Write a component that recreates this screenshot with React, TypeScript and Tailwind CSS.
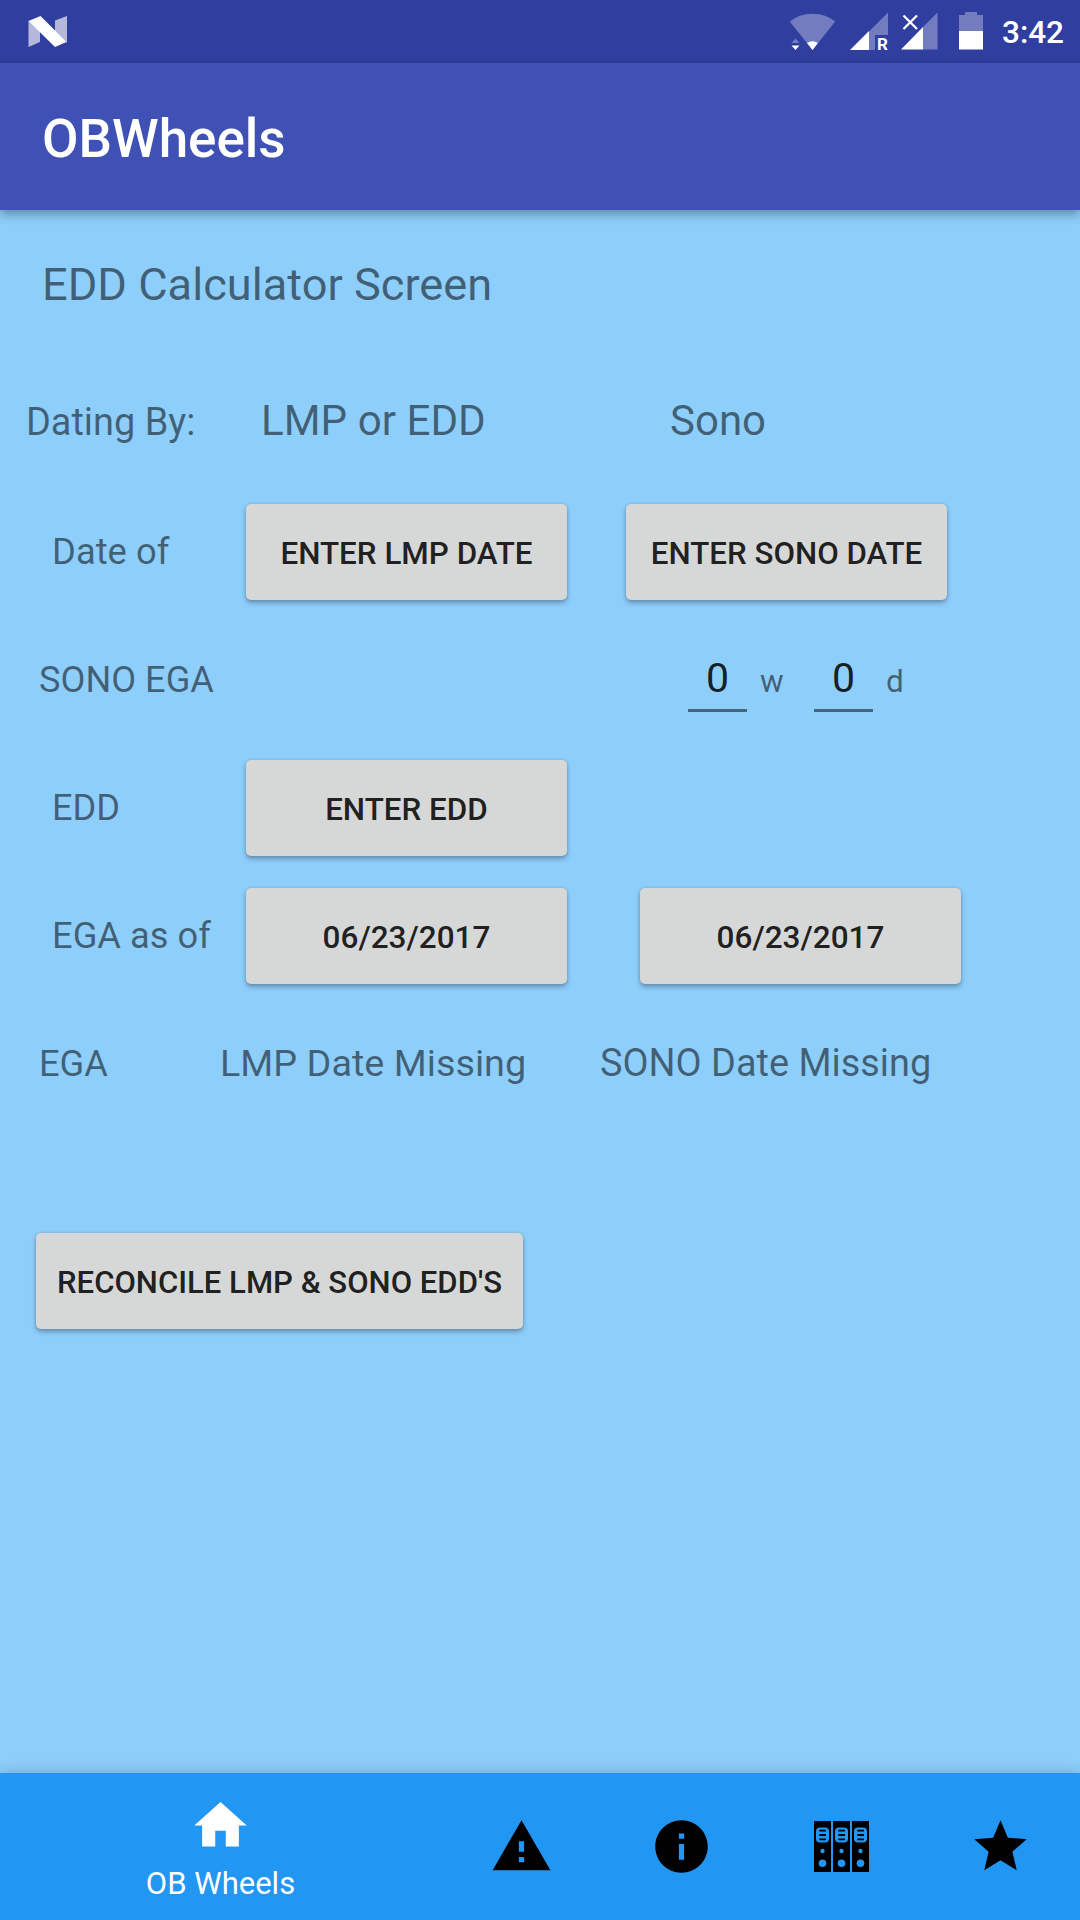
import React from 'react';

const labelClass = 'whitespace-nowrap text-black/54 leading-none';

const RaisedButton: React.FC<{ children: React.ReactNode; className?: string }> = ({ children, className = '' }) => (
  <button
    className={`h-24 shrink-0 rounded-[5px] bg-[#d6d7d7] pt-[3px] leading-none font-medium whitespace-nowrap text-black/87 shadow-[0_3px_5px_rgba(0,0,0,0.28),0_0_3px_rgba(0,0,0,0.14)] ${className}`}
  >
    {children}
  </button>
);

const NumberField: React.FC<{ value: string }> = ({ value }) => (
  <div className="flex h-[63px] w-[59px] items-center justify-center border-b-3 border-[#45667c] text-[41px] leading-none text-black/87">
    {value}
  </div>
);

const StatusBar: React.FC = () => (
  <div className="flex h-[63px] items-center justify-between bg-[#303f9f]">
    <svg width="96" height="63" viewBox="0 0 96 63" fill="#fff">
      <path opacity=".64" d="M28.5 20.5L40 31v11l-11.500 5z" />
      <path opacity=".64" d="M55 20.500L67 16v27L55 31z" />
      <path d="M28.500 21L40.500 16L66.500 42L55 47z" />
    </svg>
    <div className="flex items-center">
      <svg width="220" height="63" viewBox="780 0 220 63" fill="#fff">
        {/* wifi */}
        <path opacity=".32" d="M812.500 50L789.800 21.500Q799 13.700 812.500 13.700T835.200 21.500z" />
        <path d="M812.500 50L807 43Q812.500 39.500 818 43z" />
        <path opacity=".32" d="M795.500 38.500l4 4.500h-8z" />
        <path d="M791.500 45.500h8l-4 4.500z" />
        {/* roaming sim */}
        <path opacity=".32" d="M869 31.500L888 12.500V35H875v15h-6z" />
        <path d="M850 50l19-19v19z" />
        <text x="877" y="50" fontSize="17" fontWeight="700" fontFamily="Roboto, sans-serif">R</text>
        {/* second sim, no service */}
        <path opacity=".32" d="M923 27l14.500-14.500V49.500H923z" />
        <path d="M901 49.500L923 27v22.500z" />
        <path d="M903.500 15.500l13.500 13.500m0-13.500l-13.500 13.500" stroke="#fff" strokeWidth="2.200" />
        {/* battery */}
        <path opacity=".32" d="M959 15h6v-3h12v3h6v16h-24z" />
        <path d="M959 31h24v18.500h-24z" />
      </svg>
      <span className="w-20 pt-[3px] pl-[2px] text-[31.5px] leading-none font-medium text-white">3:42</span>
    </div>
  </div>
);

const RackIcon: React.FC = () => (
  <svg width="55" height="51" viewBox="0 0 55 51">
    {[0, 19, 38].map((x) => (
      <g key={x} transform={`translate(${x} 0)`}>
        <rect width="17" height="51" />
        <rect x="2" y="6.500" width="13" height="15" rx="4" fill="#2196f3" />
        <path d="M5.300 9.700h6.700M5.300 14h6.700M5.300 18.300h6.700" stroke="#000" strokeWidth="1.800" />
        <circle cx="8.500" cy="30" r="2.200" fill="#2196f3" />
        <circle cx="8.500" cy="42.300" r="3.800" fill="#2196f3" />
      </g>
    ))}
  </svg>
);

const tabIcons = [
  'M1 21h22L12 2 1 21zm12-3h-2v-2h2v2zm0-4h-2v-4h2v4z',
  'M12 2C6.480 2 2 6.480 2 12s4.480 10 10 10 10-4.480 10-10S17.520 2 12 2zm1 15h-2v-6h2v6zm0-8h-2V7h2v2z',
  'rack',
  'M12 17.270L18.180 21l-1.640-7.030L22 9.240l-7.190-.610L12 2 9.190 8.630 2 9.240l5.460 4.730L5.820 21z',
];

const BottomNav: React.FC = () => (
  <nav className="relative flex h-[147px] bg-[#2196f3] shadow-[0_0_14px_rgba(0,0,0,0.2)]">
    <div className="flex w-[441px] flex-col items-center pt-[21px] text-white">
      <svg width="63" height="63" viewBox="0 0 24 24" fill="currentColor">
        <path d="M10 20v-6h4v6h5v-8h3L12 3 2 12h3v8z" />
      </svg>
      <span className="mt-[11px] text-[31px] leading-none">OB Wheels</span>
    </div>
    {tabIcons.map((d) => (
      <div key={d} className="flex flex-1 items-center justify-center pl-px">
        {d === 'rack' ? (
          <div className="pl-[2px]">
            <RackIcon />
          </div>
        ) : (
          <svg width="63" height="63" viewBox="0 0 24 24">
            <path d={d} />
          </svg>
        )}
      </div>
    ))}
  </nav>
);

export default function App() {
  return (
    <div className="flex h-[1920px] w-[1080px] flex-col overflow-hidden bg-[#8ecefb] font-[Roboto,sans-serif]">
      <StatusBar />
      <header className="flex h-[147px] items-center bg-[#3f51b5] pt-1.5 pl-[42px] shadow-[0_4px_10px_rgba(0,0,0,0.35)]">
        <h1 className="text-[53px] leading-none font-medium text-white">OBWheels</h1>
      </header>

      <main className="flex-1 pt-[52px]">
        <h2 className={`${labelClass} pl-[42px] text-[45.2px]`}>EDD Calculator Screen</h2>

        <div className="mt-[53px] flex h-32 items-baseline pt-10">
          <span className={`${labelClass} w-[261px] pl-[26px] text-[37.9px]`}>Dating By:</span>
          <span className={`${labelClass} w-[409px] text-[42.2px]`}>LMP or EDD</span>
          <span className={`${labelClass} text-[42px]`}>Sono</span>
        </div>

        <div className="flex h-32 items-center">
          <span className={`${labelClass} w-[246px] pl-[52px] text-[36.4px]`}>Date of</span>
          <RaisedButton className="w-[321px] text-[31.4px]">ENTER LMP DATE</RaisedButton>
          <RaisedButton className="ml-[59px] w-[321px] text-[31.3px]">ENTER SONO DATE</RaisedButton>
        </div>

        <div className="flex h-32 items-center">
          <span className={`${labelClass} w-[688px] pl-[39px] text-[36.2px]`}>SONO EGA</span>
          <NumberField value="0" />
          <span className={`${labelClass} w-[67px] pt-[3px] pl-[13px] text-[31.5px]`}>w</span>
          <NumberField value="0" />
          <span className={`${labelClass} pt-[3px] pl-[13px] text-[31.5px]`}>d</span>
        </div>

        <div className="flex h-32 items-center">
          <span className={`${labelClass} w-[246px] pl-[52px] text-[36.2px]`}>EDD</span>
          <RaisedButton className="w-[321px] text-[31.4px]">ENTER EDD</RaisedButton>
        </div>

        <div className="flex h-32 items-center">
          <span className={`${labelClass} w-[246px] pl-[52px] text-[36.3px]`}>EGA as of</span>
          <RaisedButton className="w-[321px] text-[31.5px]">06/23/2017</RaisedButton>
          <RaisedButton className="ml-[73px] w-[321px] text-[31.5px]">06/23/2017</RaisedButton>
        </div>

        <div className="flex h-32 items-center">
          <span className={`${labelClass} w-[220px] pl-[39px] text-[36.2px]`}>EGA</span>
          <span className={`${labelClass} w-[380px] pb-px text-[37.8px]`}>LMP Date Missing</span>
          <span className={`${labelClass} pb-px text-[37.9px]`}>SONO Date Missing</span>
        </div>

        <RaisedButton className="mt-[105px] ml-[36px] w-[487px] text-[31.1px]">RECONCILE LMP &amp; SONO EDD'S</RaisedButton>
      </main>

      <BottomNav />
    </div>
  );
}
